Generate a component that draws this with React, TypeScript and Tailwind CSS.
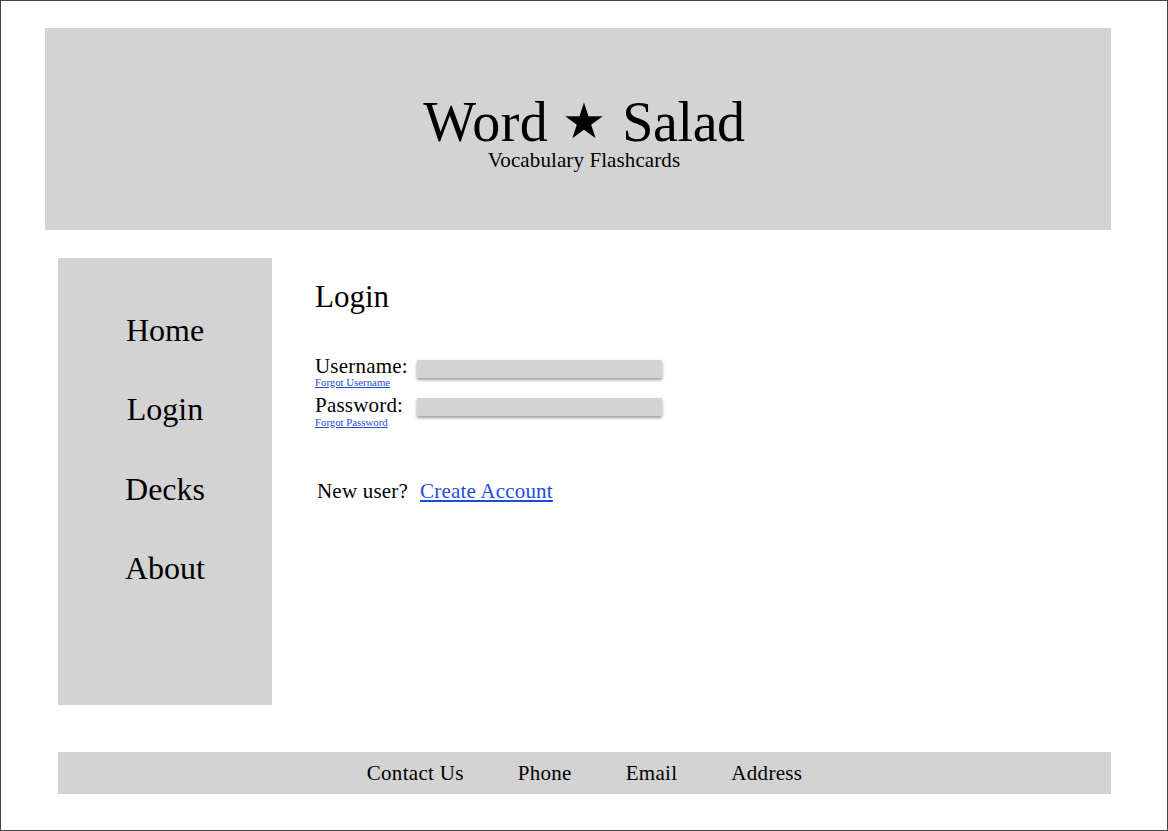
const serif = "font-['Liberation_Serif',serif]";

const navItems = ["Home", "Login", "Decks", "About"];
const footerItems = ["Contact Us", "Phone", "Email", "Address"];

const Field = ({ label, forgot, labelBox, inputTop }: { label: string; forgot: string; labelBox: string; inputTop: string }) => (
  <div className="flex">
    <div className="w-[102px]">
      <div className={`text-[21px] leading-[22px] tracking-[0.2px] text-black ${labelBox}`}>{label}</div>
      <a href="#" className="block h-[11px] w-fit text-[10.8px] leading-[11px] text-[#1d4ed8] underline">
        {forgot}
      </a>
    </div>
    <div className={`h-[18px] w-[245px] bg-[#d3d3d3] shadow-[0_2px_3px_rgba(0,0,0,0.4)] ${inputTop}`} />
  </div>
);

export default function App() {
  return (
    <div className={`${serif} box-border h-[831px] w-[1168px] border border-[#444444] bg-white px-[44px] pt-[27px]`}>
      <header className="flex h-[202px] w-[1066px] flex-col items-center bg-[#d3d3d3] pt-[63px] pl-[12px]">
        <h1 className="flex h-[62px] items-center text-[56px] leading-[62px] text-black">
          <span className="tracking-[0.5px]">Word</span>
          <span className="mr-[16px] ml-[14px] text-[49px]">★</span>
          <span className="tracking-[-0.4px]">Salad</span>
        </h1>
        <p className="-mt-[5px] text-[21px] leading-[24px] tracking-[0.1px] text-black">Vocabulary Flashcards</p>
      </header>
      <div className="mt-[28px] ml-[13px] flex h-[447px]">
        <nav className="flex w-[214px] flex-col items-center gap-[44.3px] bg-[#d3d3d3] pt-[55px]">
          {navItems.map((item) => (
            <a key={item} href="#" className="h-[35px] text-[32px] leading-[35px] text-black">
              {item}
            </a>
          ))}
        </nav>
        <main className="ml-[43px] pt-[21px]">
          <h2 className="text-[31px] leading-[36px] text-black">Login</h2>
          <div className="mt-[40px] flex flex-col gap-[6px]">
            <Field label="Username:" forgot="Forgot Username" labelBox="h-[22px]" inputTop="mt-[5px]" />
            <Field label="Password:" forgot="Forgot Password" labelBox="h-[23px]" inputTop="mt-[4px]" />
          </div>
          <p className="mt-[50px] ml-[2px] flex gap-[12px] text-[21px] leading-[26px] tracking-[0.2px] text-black">
            <span>New user?</span>
            <a href="#" className="text-[#1d4ed8] underline">
              Create Account
            </a>
          </p>
        </main>
      </div>
      <footer className="mt-[47px] ml-[13px] flex h-[42px] w-[1053px] items-center justify-center gap-[54px] bg-[#d3d3d3] pt-[2px] text-[21px] tracking-[0.3px] text-black">
        {footerItems.map((item) => (
          <a key={item} href="#">
            {item}
          </a>
        ))}
      </footer>
    </div>
  );
}
